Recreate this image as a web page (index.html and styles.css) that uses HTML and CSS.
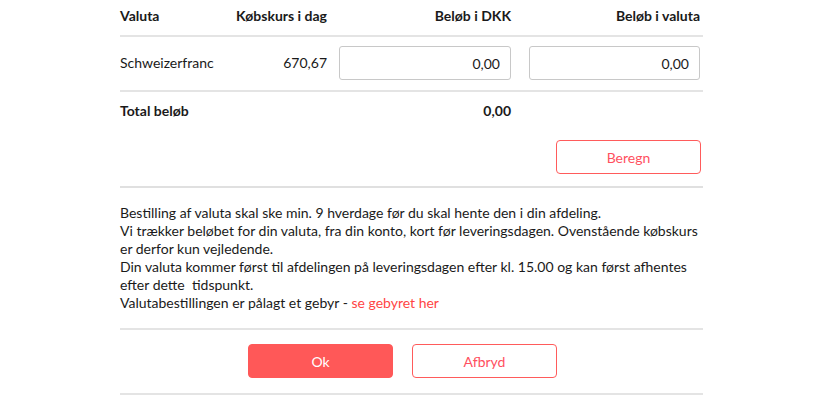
FILE: index.html
```html
<!DOCTYPE html>
<html lang="da">
<head>
<meta charset="utf-8">
<title>Valutabestilling</title>
<link rel="stylesheet" href="styles.css">
</head>
<body>
<div class="wrap">
  <div class="row head">
    <div class="c1">Valuta</div>
    <div class="c2">Købskurs i dag</div>
    <div class="c3">Beløb i DKK</div>
    <div class="c4">Beløb i valuta</div>
  </div>
  <div class="row line">
    <div class="c1">Schweizerfranc</div>
    <div class="c2">670,67</div>
    <div class="c3"><input class="amount" type="text" value="0,00"></div>
    <div class="c4"><input class="amount" type="text" value="0,00"></div>
  </div>
  <div class="total-block">
    <div class="row total">
      <div class="c1">Total beløb</div>
      <div class="c2"></div>
      <div class="c3">0,00</div>
      <div class="c4"></div>
    </div>
    <div class="calc">
      <button class="btn btn-outline btn-calc">Beregn</button>
    </div>
  </div>
  <div class="info">
    Bestilling af valuta skal ske min. 9 hverdage før du skal hente den i din afdeling.<br>
    Vi trækker beløbet for din valuta, fra din konto, kort før leveringsdagen. Ovenstående købskurs er derfor kun vejledende.<br>
    Din valuta kommer først til afdelingen på leveringsdagen efter kl. 15.00 og kan først afhentes efter dette&nbsp; tidspunkt.<br>
    Valutabestillingen er pålagt et gebyr - <a class="link" href="#">se gebyret her</a>
  </div>
  <div class="actions">
    <button class="btn btn-primary">Ok</button>
    <button class="btn btn-outline">Afbryd</button>
  </div>
</div>
</body>
</html>
```
FILE: styles.css
```css
* { box-sizing: border-box; }
body {
  margin: 0;
  background: #fff;
  font-family: Lato, "Open Sans", Arial, sans-serif;
  font-size: 14px;
  color: #1a1a1a;
}
.wrap {
  margin-left: 120px;
  width: 583px;
}
.row {
  display: flex;
  align-items: center;
  line-height: 18px;
}
.c1 { width: 100px; }
.c2 { width: 107px; text-align: right; }
.c3 { width: 172px; margin-left: 12px; text-align: right; }
.c4 { width: 171px; margin-left: 18px; text-align: right; }

.head {
  font-weight: 700;
  padding: 7px 0 10px;
  border-bottom: 2px solid #e4e4e4;
}
.line {
  padding: 9px 0 10px;
  border-bottom: 2px solid #e4e4e4;
}
.amount {
  display: block;
  width: 100%;
  height: 34px;
  border: 1px solid #c8c8c8;
  border-radius: 3px;
  padding: 0 10px;
  text-align: right;
  font: inherit;
  color: #1a1a1a;
}
.total-block {
  padding: 10px 0 12px;
  border-bottom: 2px solid #e0e0e0;
}
.total { font-weight: 700; }
.calc {
  display: flex;
  justify-content: flex-end;
  margin-top: 20px;
  padding-right: 2px;
}
.btn {
  width: 145px;
  height: 34px;
  border-radius: 4px;
  font: inherit;
  font-size: 14px;
  cursor: pointer;
}
.btn-outline {
  background: #fff;
  border: 1px solid #ff5b5b;
  color: #ff5060;
}
.btn-primary {
  background: #ff5858;
  border: 1px solid #ff5858;
  color: #fff;
}
.info {
  padding: 16px 0 16px;
  line-height: 18px;
  border-bottom: 2px solid #e4e4e4;
}
.link {
  color: #ff4545;
  text-decoration: none;
}
.actions {
  display: flex;
  gap: 19px;
  padding: 14px 0 15px 128px;
  border-bottom: 2px solid #e4e4e4;
}
```
